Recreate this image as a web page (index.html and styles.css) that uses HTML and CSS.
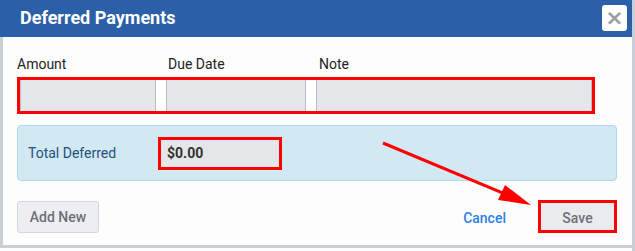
FILE: index.html
```html
<!DOCTYPE html>
<html lang="en">
<head>
    <meta charset="UTF-8">
    <title>Deferred Payments</title>
    <link rel="stylesheet" href="styles.css">
</head>
<body>
    <div class="modal">
        <div class="modal-header">
            <h2 class="modal-title">Deferred Payments</h2>
            <button class="close-btn">&times;</button>
        </div>
        <div class="modal-body">
            <div class="labels">
                <div class="label label-amount">Amount</div>
                <div class="label label-date">Due Date</div>
                <div class="label">Note</div>
            </div>
            <div class="input-row highlight">
                <div class="input input-amount"></div>
                <div class="input input-date"></div>
                <div class="input input-note"></div>
            </div>

            <div class="total-panel">
                <div class="total-label">Total Deferred</div>
                <div class="total-value highlight">$0.00</div>
            </div>

            <div class="footer">
                <button class="btn-light">Add New</button>
                <div class="footer-right">
                    <a class="link-cancel">Cancel</a>
                    <button class="btn-save highlight">Save</button>
                </div>
            </div>
        </div>

        <!-- annotation arrow -->
        <svg class="arrow" width="635" height="251" viewBox="0 0 635 251">
            <line x1="383" y1="143" x2="522" y2="201" stroke="#f00" stroke-width="3"/>
            <polygon points="531,205 505,185 498,200" fill="#f00"/>
        </svg>
    </div>
</body>
</html>
```

FILE: styles.css
```css
body {
    margin: 0;
    background-color: #cbcfd6;
    font-family: Roboto, 'Liberation Sans', sans-serif;
    font-size: 14px;
    color: #222;
}
.modal {
    position: relative;
    width: 632px;
    height: 251px;
    background: #fdfdfd;
}
.modal-header {
    height: 37px;
    background-color: #2b5fa8;
    display: flex;
    align-items: flex-start;
    justify-content: space-between;
    padding: 0 5px 0 20px;
}
.modal-title {
    margin: 0;
    padding-top: 7px;
    font-size: 18px;
    font-weight: bold;
    color: #fff;
    line-height: 21px;
}
.close-btn {
    margin-top: 5px;
    width: 25px;
    height: 26px;
    border: none;
    border-radius: 3px;
    background: #fff;
    color: #999da5;
    font-size: 22px;
    font-weight: bold;
    line-height: 26px;
    padding: 0;
    font-family: 'DejaVu Sans', sans-serif;
}
.modal-body {
    border-left: 3px solid #c9cdd5;
    border-bottom: 3px solid #c9cdd5;
    padding: 19px 15px 15px 14px;
    height: 211px;
    box-sizing: border-box;
}
.labels {
    display: flex;
    line-height: 17px;
    margin-bottom: 4px;
}
.label-amount {
    width: 151px;
}
.label-date {
    width: 151px;
}
.highlight {
    border: 3px solid #f00 !important;
}
.input-row {
    display: flex;
    gap: 10px;
    width: 572px;
    background: #fff;
}
.input {
    height: 31px;
    background: #e4e6ea;
    border-left: 1px solid #b9bdc4;
    border-right: 1px solid #b9bdc4;
    box-sizing: border-box;
}
.input-amount {
    width: 136px;
}
.input-date {
    width: 140px;
}
.input-note {
    flex: 1;
}
.total-panel {
    margin-top: 11px;
    height: 56px;
    box-sizing: border-box;
    background: #d2e8f3;
    border: 1px solid #acdaea;
    border-radius: 4px;
    display: flex;
    align-items: center;
    padding-left: 10px;
}
.total-label {
    width: 130px;
    color: #24527a;
}
.total-value {
    width: 124px;
    height: 33px;
    box-sizing: border-box;
    background: #e4e6ea;
    font-weight: bold;
    color: #333;
    display: flex;
    align-items: center;
    padding-left: 6px;
}
.footer {
    margin-top: 19px;
    display: flex;
    align-items: center;
    justify-content: space-between;
}
.footer-right {
    display: flex;
    align-items: center;
    gap: 32px;
}
button {
    font-family: Roboto, 'Liberation Sans', sans-serif;
    cursor: pointer;
}
.btn-light {
    width: 82px;
    height: 32px;
    background: #eceef1;
    border: 1px solid #d3d6dc;
    border-radius: 3px;
    color: #6b7078;
    font-size: 14px;
    font-weight: 500;
}
.link-cancel {
    color: #2f7fe6;
    font-weight: 500;
    margin-top: 2px;
}
.btn-save {
    width: 79px;
    height: 33px;
    background: #e9ebee;
    border-radius: 0;
    color: #6b7078;
    font-size: 14px;
    font-weight: 500;
    padding-top: 3px;
}
.arrow {
    position: absolute;
    left: 0;
    top: 0;
    pointer-events: none;
}
```
